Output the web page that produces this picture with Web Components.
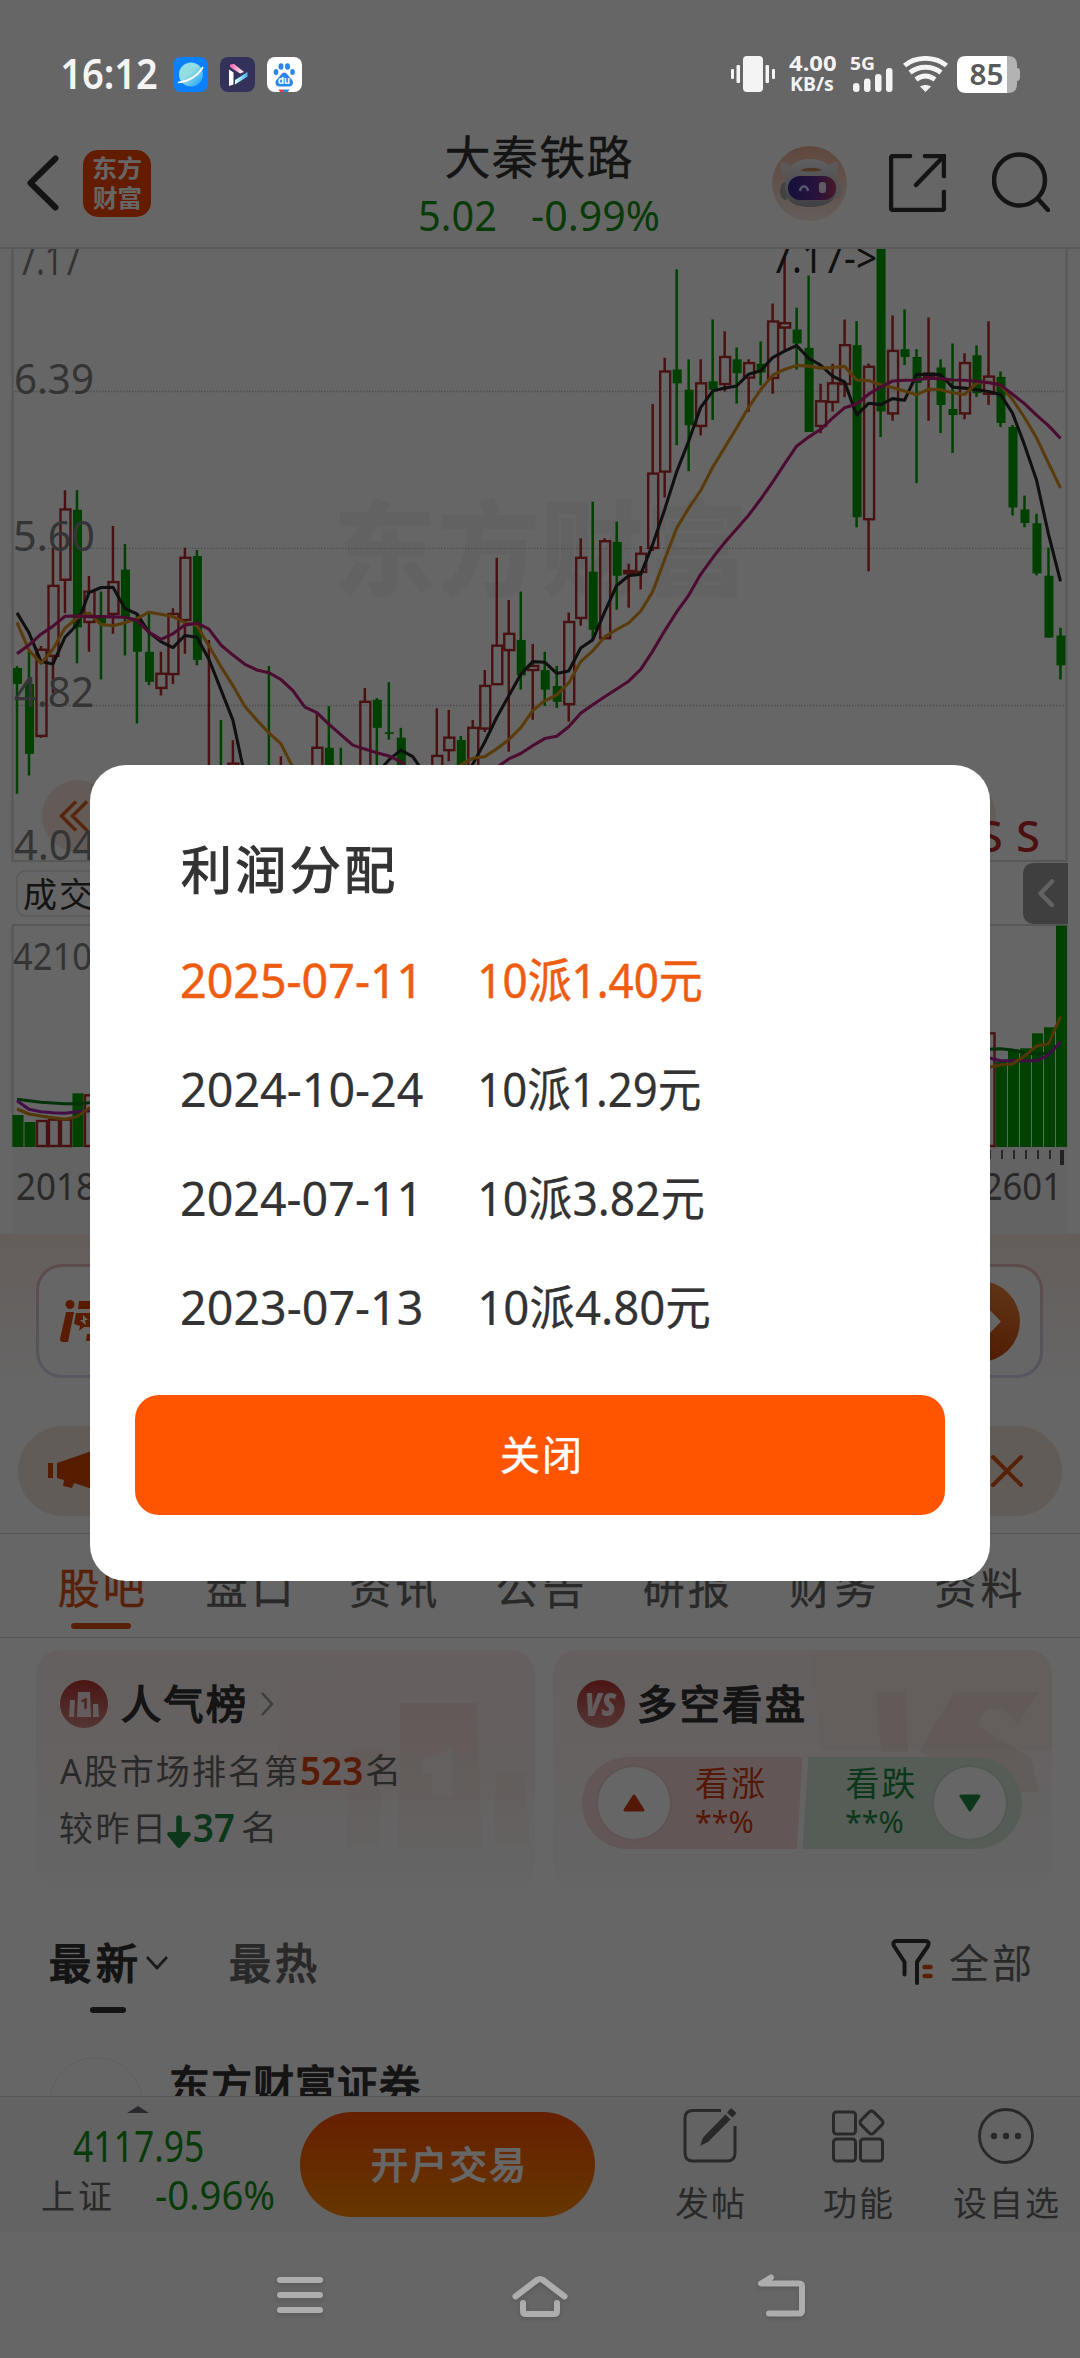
<!DOCTYPE html>
<html lang="zh-CN">
<head>
<meta charset="utf-8">
<title>大秦铁路</title>
<style>
html,body{margin:0;padding:0}
body{width:1080px;height:2358px;overflow:hidden;background:#fff;font-family:"Noto Sans","Noto Sans CJK SC",sans-serif;color:#333}
</style>
</head>
<body>
<stock-app></stock-app>
<script>
const FONT = '"Noto Sans","Noto Sans CJK SC",sans-serif';
const ctx = document.createElement('canvas').getContext('2d');

function define(name, html, setup) {
  const tpl = document.createElement('template');
  tpl.innerHTML = html;
  customElements.define(name, class extends HTMLElement {
    connectedCallback() {
      if (this.shadowRoot) return;
      this.attachShadow({ mode: 'open' }).append(tpl.content.cloneNode(true));
      if (setup) setup(this, this.shadowRoot);
    }
  });
}

/* One line of text whose ink spans exactly `w` pixels.
   mode="space" spreads the letters, the default scales them. */
define('fit-text', `<style>
:host{display:block;flex:none;white-space:nowrap;font-family:${FONT}}
span{display:inline-block;transform-origin:0 50%;vertical-align:top}
</style><span><slot></slot></span>`, (el, root) => {
  const s = +el.getAttribute('size'), w = +el.getAttribute('w');
  const lh = el.getAttribute('lh') || Math.round(s * 1.2);
  const weight = el.getAttribute('weight') || 400;
  const text = el.textContent, n = [...text].length;
  ctx.font = `${weight} ${s}px ${FONT}`;
  const m = ctx.measureText(text);
  const ink = m.actualBoundingBoxLeft + m.actualBoundingBoxRight;
  el.style.cssText += `;font-size:${s}px;font-weight:${weight};line-height:${lh}px;height:${lh}px;width:${w}px;`;
  const c = el.getAttribute('color'); if (c) el.style.color = c;
  const st = el.getAttribute('stroke'); if (st) el.style.webkitTextStroke = st + 'px currentColor';
  const span = root.querySelector('span');
  if (el.getAttribute('mode') === 'space' && n > 1) {
    span.style.letterSpacing = (w - ink) / (n - 1) + 'px';
    span.style.transform = `translateX(${m.actualBoundingBoxLeft}px)`;
  } else {
    /* digits sit slightly below the middle of the line box */
    span.style.transform = `translateY(${(-s * .03).toFixed(2)}px) scaleX(${w / ink}) translateX(${m.actualBoundingBoxLeft}px)`;
  }
});

define('status-bar', `<style>
:host{display:flex;box-sizing:border-box;height:120px;padding:28px 60px 0 62px;align-items:center;justify-content:space-between;position:relative;z-index:2;color:#f4f4f4}
.l,.r{display:flex;align-items:center}
.apps{display:flex;gap:12px;margin-left:16px}
svg{display:block;flex:none}
.sp{display:flex;flex-direction:column;align-items:center;width:48px;margin:-2px 14px 0 13px}
</style>
<div class="l">
  <fit-text size="42" w="95" weight="600" lh="50">16:12</fit-text>
  <div class="apps">
    <svg width="35" height="35" viewBox="0 0 35 35"><defs><linearGradient id="p" x1="0" y1="0" x2="1" y2="1"><stop offset="0" stop-color="#9be0ee"/><stop offset=".45" stop-color="#8fdde0"/><stop offset="1" stop-color="#159bff"/></linearGradient></defs><rect width="35" height="35" rx="8" fill="#0a80ff"/><circle cx="18" cy="17.500" r="12" fill="url(#p)"/><path d="M5 25.500C14 25 25 19 30 10" fill="none" stroke="#fff" stroke-width="1.700"/></svg>
    <svg width="35" height="35" viewBox="0 0 35 35"><defs><linearGradient id="a"><stop stop-color="#ff5ca8"/><stop offset="1" stop-color="#fff"/></linearGradient><linearGradient id="b" x1="1" x2="0"><stop stop-color="#3fb4f4"/><stop offset="1" stop-color="#dff"/></linearGradient></defs><rect width="35" height="35" rx="8" fill="#32325a"/><path d="M9 12.500l4.500 3v12l-4.500 1.500z" fill="#fff"/><path d="M10 7.500l4-.5 10 8-4 1.500L10 10z" fill="url(#a)"/><path d="M15 23l12.500-8v4.500L15 27.500z" fill="url(#b)"/></svg>
    <svg width="35" height="35" viewBox="0 0 35 35"><rect width="35" height="35" rx="8" fill="#fff"/><g fill="#2a86ea"><ellipse cx="14" cy="9.500" rx="2.500" ry="3.300"/><ellipse cx="20.500" cy="9.500" rx="2.500" ry="3.300"/><ellipse cx="9" cy="15" rx="2.300" ry="3"/><ellipse cx="25.500" cy="15" rx="2.300" ry="3"/><path d="M17.300 15.500c3 0 4 4 6.700 6.200 3.600 3.100 2 7.800-2 7.800h-9.500c-4 0-5.600-4.700-2-7.800 2.700-2.200 3.800-6.200 6.800-6.200z"/></g><path d="M11.500 32.500H17V35h-4z" fill="#e33b55"/><path d="M17 32.500h5.500L21 35h-4z" fill="#2a86ea"/><text x="11" y="27" font-family="Inter" font-size="9.500" font-weight="700" fill="#fff" textLength="12">du</text></svg>
  </div>
</div>
<div class="r">
  <svg width="44" height="36" viewBox="0 0 44 36" fill="#f4f4f4"><rect x="12" width="20" height="36" rx="4"/><rect x="5.500" y="9" width="3.500" height="18" rx="1"/><rect y="13" width="3" height="10" rx="1"/><rect x="34.500" y="9" width="3.500" height="18" rx="1"/><rect x="41" y="13" width="3" height="10" rx="1"/></svg>
  <div class="sp"><fit-text size="22" w="47" weight="700" lh="22">4.00</fit-text><fit-text size="19.500" w="42" weight="700" lh="21">KB/s</fit-text></div>
  <svg width="43" height="36" viewBox="0 0 43 36" fill="#f4f4f4"><text x="0" y="13.500" font-family="Noto Sans" font-weight="700" font-size="17.500" textLength="25" lengthAdjust="spacingAndGlyphs">5G</text><rect x="3" y="27" width="6.500" height="9" rx="3"/><rect x="14" y="22.500" width="6.500" height="13.500" rx="3"/><rect x="25" y="18" width="6.500" height="18" rx="3"/><rect x="36" y="12" width="6.500" height="24" rx="3"/></svg>
  <svg style="margin:0 9px 0 10px" width="45" height="36" viewBox="0 0 45 36" fill="none" stroke="#f4f4f4" stroke-width="4.800"><path d="M1.500 9.500C13 0 32 0 43.500 9.500M7 16.500c9-7 22-7 31 0M13 23.500c6-4.500 13-4.500 19 0"/><path d="M17 30.500c4-2 7-2 11 0L22.500 36z" fill="#f4f4f4" stroke="none"/></svg>
  <svg width="63" height="37" viewBox="0 0 63 37"><path d="M49 0h2c6 0 9 3 9 9v3c2 0 3 1.500 3 4v5c0 2.500-1 4-3 4v3c0 6-3 9-9 9h-2z" fill="#b3b3b3"/><path d="M9 0h41v37H9c-6 0-9-3-9-9V9c0-6 3-9 9-9z" fill="#fff"/><text x="12.500" y="28.500" font-family="Noto Sans" font-weight="600" font-size="28" fill="#5a5a5a" textLength="34" lengthAdjust="spacingAndGlyphs">85</text></svg>
</div>`);

define('stock-header', `<style>
:host{display:grid;grid-template-columns:1fr 240px 1fr;box-sizing:border-box;height:129px;padding:0 30px 8px 27px;align-items:center;border-bottom:2px solid #dcdcdc}
.l,.r{display:flex;align-items:center}.l{gap:24px}.r{justify-content:flex-end}
.c{align-self:start;margin-top:6px;display:flex;flex-direction:column;align-items:center}
.q{display:flex;gap:37px;color:#159415}
.logo{width:68px;height:67px;border-radius:15px;background:#fb4600;color:#fff;display:flex;flex-direction:column;align-items:center;justify-content:center;gap:3px}
svg{display:block;flex:none}
</style>
<div class="l">
  <svg width="32" height="56" viewBox="0 0 32 56" fill="none" stroke="#333" stroke-width="6" stroke-linecap="round" stroke-linejoin="round"><path d="M28.500 3.500L3.500 28l25 24.500"/></svg>
  <div class="logo"><fit-text size="24" w="48" weight="700" lh="27">东方</fit-text><fit-text size="24" w="48" weight="700" lh="27">财富</fit-text></div>
</div>
<div class="c"><fit-text size="46" w="186" lh="60" mode="space" stroke=".4">大秦铁路</fit-text><div class="q"><fit-text size="42" w="75" lh="60">5.02</fit-text><fit-text size="42" w="126" lh="60">-0.99%</fit-text></div></div>
<div class="r">
  <svg width="75" height="75" viewBox="0 0 75 75"><defs><linearGradient id="bg" x2="0" y2="1"><stop stop-color="#eeb49b"/><stop offset="1" stop-color="#f8e9e2"/></linearGradient><linearGradient id="v"><stop stop-color="#342a95"/><stop offset=".55" stop-color="#5e2e99"/><stop offset="1" stop-color="#b43a65"/></linearGradient><linearGradient id="h" x2="0" y2="1"><stop stop-color="#f0f0f4"/><stop offset="1" stop-color="#a0a0a8"/></linearGradient></defs><circle cx="37.500" cy="37.500" r="37.500" fill="url(#bg)"/><path d="M9 16c4 0 8 2 11 5l-8 9c-3-3-4-8-3-14zM66 16c-4 0-8 2-11 5l8 9c3-3 4-8 3-14z" fill="#e4dcde"/><ellipse cx="13" cy="45" rx="5" ry="9" fill="#a8a2a4"/><ellipse cx="65" cy="45" rx="5" ry="8" fill="#d8ccca"/><path d="M38 13c18 0 27 11 27 28 0 14-10 20-27 20S13 55 13 41c0-17 7-28 25-28z" fill="url(#h)"/><path d="M28 24c7-3 16-3 22 0-6 2-16 2-22 0z" fill="#c88a5c"/><rect x="16" y="30" width="48" height="24" rx="12" fill="url(#v)"/><path d="M28 45c1-6 7-6 8 0" fill="none" stroke="#ddd8ff" stroke-width="2.500"/><rect x="47" y="36" width="7" height="11" rx="3" fill="#f1e4f4"/></svg>
  <svg style="margin:0 46px 0 42px" width="57" height="58" viewBox="0 0 57 58" fill="none" stroke="#333" stroke-width="4.500" stroke-linecap="round" stroke-linejoin="round"><path d="M21 2H4a2 2 0 0 0-2 2v50a2 2 0 0 0 2 2h49a2 2 0 0 0 2-2V38M36 2h19v20M54 3L27 31"/></svg>
  <svg style="margin-top:-3px" width="58" height="60" viewBox="0 0 58 60" fill="none" stroke="#333" stroke-width="4.500" stroke-linecap="round"><circle cx="27.500" cy="28" r="25.500"/><path d="M46 47l10 11"/></svg>
</div>`);

/* candles: [index, isUp, high, bodyTop, bodyBottom, low] in plot units */
const CANDLES = [[0,0,1260,1266,1313,1638],[1,0,1215,1313,1520,1584],[2,1,1201,1212,1467,1472],[3,1,910,1023,1230,1340],[4,1,740,797,1005,1104],[5,0,740,798,1146,1252],[6,1,994,1040,1130,1218],[7,0,1040,1115,1134,1300],[8,1,846,1012,1106,1165],[9,0,899,975,1115,1229],[10,0,1105,1119,1218,1430],[11,0,1104,1218,1307,1317],[12,1,1218,1283,1325,1347],[13,1,1089,1106,1284,1313],[14,1,910,940,1124,1224],[15,0,917,935,1242,1258],[16,1,1183,1620,1700,1720],[17,0,1420,1620,1700,1720],[18,1,1480,1549,1580,1600],[21,0,1260,1620,1700,1710],[22,1,1527,1620,1700,1710],[25,1,1400,1502,1650,1660],[26,0,1379,1502,1650,1660],[27,0,1502,1620,1650,1660],[29,1,1325,1366,1650,1660],[30,0,1355,1360,1443,1650],[31,0,1308,1456,1461,1478],[32,0,1443,1472,1640,1650],[35,1,1385,1526,1640,1650],[36,1,1390,1472,1509,1542],[37,0,1467,1479,1640,1650],[38,1,1420,1443,1640,1650],[39,1,1272,1319,1445,1455],[40,1,940,1200,1314,1314],[41,1,1065,1165,1213,1514],[42,0,1040,1183,1288,1330],[43,1,1195,1260,1272,1419],[44,0,1218,1272,1330,1378],[45,0,1260,1319,1366,1384],[46,1,1102,1130,1373,1425],[47,1,882,940,1118,1141],[48,0,774,981,1153,1183],[49,1,882,891,1178,1178],[50,0,833,893,993,1094],[51,1,958,979,986,1088],[52,1,905,928,982,1034],[53,1,485,691,911,920],[54,1,348,389,685,762],[55,0,87,383,424,607],[56,0,353,443,548,684],[57,1,353,424,550,578],[58,0,235,418,443,532],[59,1,270,346,426,448],[60,0,318,353,394,484],[61,1,353,364,407,508],[62,0,300,366,392,430],[63,1,188,241,408,455],[64,1,50,246,259,330],[65,0,200,265,306,383],[66,0,105,319,568,568],[67,1,425,477,550,572],[68,1,366,424,479,507],[69,1,235,311,426,465],[70,0,240,311,820,850],[71,1,365,375,826,980],[72,0,20,20,507,583],[73,1,223,328,513,535],[74,0,205,323,346,370],[75,0,323,346,423,719],[76,1,229,395,405,535],[77,0,353,377,488,571],[78,0,306,500,518,630],[79,1,335,364,513,530],[80,0,312,341,453,464],[81,1,240,404,455,488],[82,0,389,405,541,553],[83,0,547,553,791,815],[84,0,756,797,837,850],[85,0,810,838,986,992],[86,0,910,993,1176,1176],[87,0,1147,1170,1258,1300]];
/* moving averages: [first index, values...] */
const LINES = [
 ['#2a2a2a',[0,1103,1162,1247,1254,1175,1138,1043,1028,1027,1090,1106,1160,1188,1206,1170,1175,1240,1330,1420,1585],[30,1580,1538,1509,1528,1580],[37,1610,1550,1485,1412,1348,1285,1247,1249,1282,1275,1207,1183,1100,1022,993,989,900,797,685,595,495,447,438,432,397,387,348,329,312,350,370,403,420,518,483,487,469,474,398,397,398,435,438,443,448,457,512,606,710,870,1010]],
 ['#e0941e',[0,1131,1214,1252,1210,1148,1118,1103,1137,1141,1132,1120,1101,1107,1114,1132,1140,1200,1262,1318,1380,1420,1458,1490,1560],[36,1590,1552,1533,1528,1505,1478,1443,1392,1363,1346,1310,1247,1215,1174,1152,1133,1098,1040,945,852,793,741,672,614,556,495,443,400,383,371,373,379,377,374,414,416,427,436,447,458,441,443,452,457,424,420,430,472,525,585,660,734]],
 ['#be1e7d',[0,1224,1198,1166,1142,1113,1112,1114,1114,1115,1116,1125,1160,1181,1165,1139,1133,1151,1198,1228,1255,1272,1280,1300,1333,1382,1398,1432,1463,1494,1506,1517,1526,1543,1580],[39,1590,1560,1535,1519,1496,1475,1468,1440,1400,1375,1351,1328,1305,1270,1216,1156,1100,1051,989,940,895,855,814,767,716,662,610,583,560,527,496,485,456,435,417,415,414,409,410,414,415,418,422,429,456,484,518,549,587]]];
const VOLUME = [[0,0,1065],[1,0,1086],[2,1,1083],[3,1,1079],[4,1,1079],[5,0,1000],[6,1,1006],[81,1,820],[82,0,905],[83,0,868],[84,0,865],[85,0,820],[86,0,802],[87,0,497]];
const VLINES = [
 ['#0a7d1c',[0,1018,1022,1027,1029,1031,1031,1028,1026],[80,872,868,866,870,878,882,880,850]],
 ['#a823b4',[0,1022,1048,1055,1058,1060,1055,1053,1053],[80,885,893,902,902,902,902,885,845]],
 ['#d08a18',[0,1047,1062,1068,1073,1078,1070,1045,1030],[80,925,922,915,912,888,858,852,770]]];

define('stock-chart', `<style>:host{display:block;height:985px}svg{display:block}text{font-family:${FONT}}</style>
<svg width="1080" height="985" viewBox="0 249 1080 985">
<g fill="#f6f6f6" font-weight="900" font-size="103"><text x="333" y="588" textLength="415">东方财富</text></g>
<g stroke="#c2c2c2" stroke-dasharray="1.500 1.500" stroke-width="1.300"><path d="M12 391.500H1066M12 548.300H1066M12 705.500H1066"/></g>
<path d="M12.500 249V861M1066.500 249V861M12 861H1067M12 925H1067M12.500 925V1147M1066.500 925V1147" stroke="#dadada" stroke-width="2" fill="none"/>
<rect x="12" y="1147" width="1056" height="87" fill="#f8f8f8"/>
<g id="plot" fill="none"></g>
<g fill="#838383" font-size="42">
<text x="18" y="274.500" textLength="63" lengthAdjust="spacingAndGlyphs">7.17</text><text x="14" y="393.800" textLength="80" lengthAdjust="spacingAndGlyphs">6.39</text><text x="13" y="550.800" textLength="82" lengthAdjust="spacingAndGlyphs">5.60</text><text x="14" y="707" textLength="80" lengthAdjust="spacingAndGlyphs">4.82</text></g>
<text x="771" y="273" font-size="41" fill="#2a2a2a" textLength="106" lengthAdjust="spacingAndGlyphs">7.17-&gt;</text>
<circle cx="78" cy="816" r="36" fill="#f6e3dc"/><circle cx="960" cy="816" r="36" fill="#f6e3dc"/>
<path d="M76 801.500L61.500 816 76 830.500M87 801.500L72.500 816 87 830.500" fill="none" stroke="#d85c1a" stroke-width="3.500"/>
<text x="14" y="860" font-size="42" fill="#838383" textLength="82" lengthAdjust="spacingAndGlyphs">4.04</text>
<g fill="#be2828" font-size="43" font-weight="500"><text x="979" y="851.500" textLength="61">S S</text></g>
<rect x="17" y="871" width="140" height="45" rx="8" fill="#fff" stroke="#dedede" stroke-width="1.500"/>
<text x="23" y="906.500" font-size="34" fill="#333" textLength="106">成交量</text>
<path d="M1068 863v61h-33q-12 0-12-12v-37q0-12 12-12z" fill="#9d9d9d"/><path d="M1052 881.500l-11.500 12L1052 905" fill="none" stroke="#f4f4f4" stroke-width="4.500" stroke-linecap="round" stroke-linejoin="round"/>
<g fill="#838383" font-size="38"><text x="13" y="970" textLength="79" lengthAdjust="spacingAndGlyphs">4210</text></g>
<g fill="#666" font-size="38"><text x="16" y="1199.500" textLength="80" lengthAdjust="spacingAndGlyphs">2018</text><text x="943" y="1199.500" textLength="119" lengthAdjust="spacingAndGlyphs">202601</text></g>
<path d="M990 1150v9M1002 1150v9M1014 1150v9M1026 1150v9M1038 1150v9M1050 1150v9" stroke="#666" stroke-width="2"/><path d="M1062 1150v15" stroke="#555" stroke-width="4"/>
</svg>`, (el, root) => {
  const X = i => 17 + 11.994 * i, Y = v => 240 + v / 2.958, V = v => 760 + v / 3;
  const path = (segs, f) => segs.map(([s, ...v]) => 'M' + v.map((y, k) => `${X(s + k).toFixed(1)} ${f(y).toFixed(1)}`).join('L')).join('');
  let h = '';
  for (const [i, up, hi, t, b, lo] of CANDLES) {
    const x = X(i), c = up ? '#b42e2e' : '#00a000';
    h += up
      ? `<path d="M${x} ${Y(hi)}V${Y(t)}M${x} ${Y(b)}V${Y(lo)}" stroke="${c}" stroke-width="2.500"/><rect x="${x - 4.500}" y="${Y(t)}" width="10" height="${(b - t) / 2.958}" stroke="${c}" stroke-width="2.400"/>`
      : `<path d="M${x} ${Y(hi)}V${Y(lo)}" stroke="${c}" stroke-width="2.500"/><rect x="${x - 4}" y="${Y(t)}" width="9" height="${(b - t) / 2.958}" fill="${c}"/>`;
  }
  for (const [c, ...s] of LINES) h += `<path d="${path(s, Y)}" stroke="${c}" stroke-width="3.100" stroke-linejoin="round"/>`;
  for (const [i, up, t] of VOLUME) {
    const x = X(i) - 4.500, y = V(t);
    h += up ? `<rect x="${x + .5}" y="${y}" width="10" height="${1146 - y}" stroke="#b42e2e" stroke-width="2.400"/>` : `<rect x="${x}" y="${y}" width="11" height="${1147 - y}" fill="#00a000"/>`;
  }
  for (const [c, ...s] of VLINES) h += `<path d="${path(s, V)}" stroke="${c}" stroke-width="3"/>`;
  root.querySelector('#plot').innerHTML = h;
});

define('ask-banner', `<style>
:host{display:block;box-sizing:border-box;height:149px;padding:30px 37px 5px 36px;background:linear-gradient(#fbe9e2,#fff)}
.b{box-sizing:border-box;height:114px;border-radius:26px;padding:3px;background:linear-gradient(#ecbcb6,#d4d8ee)}
.i{height:108px;border-radius:23px;background:#fff;display:flex;align-items:center;justify-content:space-between;padding:0 20px 0 21px}
svg{display:block}
</style><div class="b"><div class="i">
<svg width="60" height="42" viewBox="0 0 60 42" fill="#e04800"><circle cx="10" cy="4.500" r="4.500"/><path d="M6 12h8L8 42H3q-3 0-3-3z"/><path d="M19 1h36l-6 40H26l1-7h15l4-25H18z"/><path d="M16 13h17l-2 14h-7l-5 4 1-5-6-2z"/><path d="M23 15l5 5h-3l1 5-6-5h3z" fill="#fff"/></svg>
<svg width="81" height="81" viewBox="0 0 81 81"><defs><linearGradient id="g" x1=".9" y1="0" x2=".4" y2="1"><stop stop-color="#f08a3c"/><stop offset="1" stop-color="#c63c00"/></linearGradient></defs><circle cx="40.500" cy="40.500" r="40.500" fill="url(#g)"/><path d="M44 29l11 11.500L44 52" fill="none" stroke="#fff" stroke-width="10"/></svg>
</div></div>`);

define('notice-bar', `<style>
:host{display:flex;box-sizing:border-box;height:90px;margin:43px 18px 17px;padding:0 38px 0 29px;border-radius:45px;background:#f6e5dc;align-items:center;justify-content:space-between}svg{display:block}
</style><svg width="60" height="42" viewBox="0 0 60 42" fill="#d84800"><rect x="1" y="13" width="5" height="15"/><path d="M10 13L42 2l14-2v40l-14-2-15-5-2 5-9-2 1-6-7-2z"/></svg>
<svg width="34" height="34" viewBox="0 0 34 34" stroke="#d85310" stroke-width="4" stroke-linecap="round"><path d="M3 3l28 28M31 3L3 31"/></svg>`);

define('tab-strip', `<style>
:host{display:flex;box-sizing:border-box;height:105px;border:solid #d6d6d6;border-width:1px 0;padding:28px 28px 0}
div{width:146.300px;flex:none;display:flex;flex-direction:column;align-items:center;color:#666}
.on{color:#de5216}i{width:60px;height:6px;border-radius:3px;background:currentColor;margin-top:9px}
</style><div class="on"><fit-text size="42" w="85" lh="52" mode="space" stroke=".5">股吧</fit-text><i></i></div><div><fit-text size="42" w="82" lh="52" mode="space" stroke=".3">盘口</fit-text></div><div><fit-text size="42" w="85" lh="52" mode="space" stroke=".3">资讯</fit-text></div><div><fit-text size="42" w="85" lh="52" mode="space" stroke=".3">公告</fit-text></div><div><fit-text size="42" w="85" lh="52" mode="space" stroke=".3">研报</fit-text></div><div><fit-text size="42" w="85" lh="52" mode="space" stroke=".3">财务</fit-text></div><div><fit-text size="42" w="85" lh="52" mode="space" stroke=".3">资料</fit-text></div>`);

define('promo-card', `<style>
:host{display:block;box-sizing:border-box;width:499px;height:240px;border-radius:24px;padding:26px 24px 0 24px;background:linear-gradient(#fdf0ee,#fdf4f2 50%,#fcfafa 85%,#fdfdfd);overflow:hidden;position:relative}
header{display:flex;align-items:center;height:56px}
.art{position:absolute;inset:0;z-index:0}
.in{position:relative}
</style><div class="art"><slot name="art"></slot></div><div class="in"><header><slot name="title"></slot></header><slot></slot></div>`);

define('card-row', `<style>
:host{display:flex;justify-content:space-between;padding:12px 28px 0 36px;height:240px}
svg{display:block;flex:none}
.t{display:flex;align-items:center}
.ln{display:flex;height:57px;align-items:center;color:#666}
.p1{margin-top:10px}
.vote{display:flex;margin:25px 0 0 5px;width:440px;height:92px}
.half{display:flex;align-items:center;height:92px;box-sizing:border-box}
.up{background:#f6d8d6;border-radius:46px 0 0 46px;clip-path:polygon(0 0,100% 0,97.500% 100%,0 100%);color:#d23c14;padding-left:16px;width:221px}
.dn{background:#d4e8d8;border-radius:0 46px 46px 0;clip-path:polygon(2.700% 0,100% 0,100% 100%,0 100%);color:#218a42;padding-left:44px;width:220px}
.c{width:72px;height:72px;border-radius:50%;background:#fff;display:flex;align-items:center;justify-content:center;box-shadow:0 0 0 2px #0000000a;flex:none}
.tx{display:flex;flex-direction:column;margin-top:-3px}
</style>
<promo-card>
  <svg slot="art" width="499" height="240" viewBox="0 0 499 240"><defs><linearGradient id="f1" x2="0" y2="1"><stop stop-color="#f2d6d3"/><stop offset="1" stop-color="#faf2ef"/></linearGradient></defs><path d="M290 0h209v150H242V30h45z" fill="#fbeeea" opacity=".45"/><path d="M364 53h77l5 145h-84zM314 101h33l-4 96h-33zM459 124h30l5 72h-35z" fill="url(#f1)" opacity=".6"/><path d="M386 109l30-10v46h-20v-22l-10 1z" fill="#fdf8f6" opacity=".6"/></svg>
  <div slot="title" class="t"><svg width="48" height="48" viewBox="0 0 48 48"><defs><linearGradient id="g1" x2="0" y2="1"><stop stop-color="#b93735"/><stop offset="1" stop-color="#d18683"/></linearGradient></defs><circle cx="24" cy="24" r="24" fill="url(#g1)"/><path d="M10 20h5l-1 17H9zM18 12h12l1 25H17zM33 24h5l1 13h-6z" fill="#f5e8e6"/><path d="M21.500 21.500l4-2V29" fill="none" stroke="#c25c58" stroke-width="2.500"/></svg><fit-text style="margin-left:14px" size="40" w="122" stroke="1.600" lh="56" mode="space">人气榜</fit-text><svg style="margin-left:17px" width="13" height="24" viewBox="0 0 13 24" fill="none" stroke="#999" stroke-width="2.500"><path d="M1 1l10 11L1 23"/></svg></div>
  <div class="ln p1"><fit-text size="34" w="237" lh="50" mode="space">A股市场排名第</fit-text><fit-text style="margin-left:5px" size="39" w="60" weight="600" lh="50" color="#dc4510">523</fit-text><fit-text style="margin-left:4px" size="34" w="30" lh="50">名</fit-text></div>
  <div class="ln"><fit-text size="34" w="101" lh="50" mode="space">较昨日</fit-text><svg style="margin:8px 3px 0 6px" width="24" height="34" viewBox="0 0 24 34" fill="#218a42"><path d="M12 3v18" stroke="#218a42" stroke-width="5.500" stroke-linecap="round"/><path d="M2 17h20q3 1 1 4L14 32q-2 2-4 0L1 21q-2-3 1-4z"/></svg><fit-text size="40" w="40" weight="600" lh="50" color="#218a42">37</fit-text><fit-text style="margin-left:8px" size="34" w="30" lh="50">名</fit-text></div>
</promo-card>
<promo-card>
  <svg slot="art" width="499" height="240" viewBox="0 0 499 240"><path d="M257 0h242v100H268z" fill="#f8e4e1" opacity=".45"/><path d="M323 42h29l3 60h-27zM366 102l35-60h85l-22 32c-12-22-42-20-36 4l50 30 8 34h-22z" fill="#f0d6d4" opacity=".5"/></svg>
  <div slot="title" class="t"><svg width="48" height="48" viewBox="0 0 48 48"><defs><linearGradient id="g2" x2="0" y2="1"><stop stop-color="#b93735"/><stop offset="1" stop-color="#d18683"/></linearGradient></defs><circle cx="24" cy="24" r="24" fill="url(#g2)"/><text x="8" y="36" font-family="Open Sans" font-style="italic" font-weight="800" font-size="31" fill="#f5e8e6" textLength="31" lengthAdjust="spacingAndGlyphs">VS</text></svg><fit-text style="margin-left:14px" size="40" w="165" stroke="1.600" lh="56" mode="space">多空看盘</fit-text></div>
  <div class="vote">
    <div class="half up"><div class="c"><svg width="22" height="18" viewBox="0 0 22 18"><path d="M2 16L11 2l9 14z" fill="#d23c14" stroke="#d23c14" stroke-width="3" stroke-linejoin="round"/></svg></div><div class="tx" style="margin-left:26px"><fit-text size="34" w="68" lh="41" mode="space">看涨</fit-text><fit-text size="31" w="57" lh="36">**%</fit-text></div></div>
    <div class="half dn"><div class="tx"><fit-text size="34" w="68" lh="41" mode="space">看跌</fit-text><fit-text size="31" w="57" lh="36">**%</fit-text></div><div class="c" style="margin-left:20px"><svg width="22" height="18" viewBox="0 0 22 18"><path d="M2 2h18l-9 14z" fill="#218a42" stroke="#218a42" stroke-width="3" stroke-linejoin="round"/></svg></div></div>
  </div>
</promo-card>`);

define('feed-filter', `<style>
:host{display:flex;box-sizing:border-box;height:160px;padding:43px 50px 0 50px}
.n{width:180px;display:flex;flex-direction:column}.a{display:flex;align-items:center;gap:9px}
i{width:36px;height:6px;border-radius:3px;background:#333;margin:14px 0 0 40px}
.f{display:flex;margin-left:auto;height:60px;align-items:center;gap:17px;color:#666}svg{display:block}
</style><div class="n"><div class="a"><fit-text size="42" w="87" stroke="1.700" lh="60" mode="space">最新</fit-text><svg width="22" height="14" viewBox="0 0 22 14" fill="none" stroke="#444" stroke-width="2.800"><path d="M1 1l10 11L21 1"/></svg></div><i></i></div>
<fit-text size="42" w="86" stroke="1.400" lh="60" color="#666" mode="space">最热</fit-text>
<div class="f"><svg style="margin-bottom:3px" width="42" height="46" viewBox="0 0 42 46" fill="none" stroke="#333" stroke-width="4" stroke-linecap="round" stroke-linejoin="round"><path d="M13.500 35.500V23L3 7q-2-5 3-5h28q5 0 3 5L26 23v21"/><path d="M33.500 28h6M33.500 37h6" stroke="#e05210" stroke-width="4.500"/></svg><fit-text size="40" w="80" lh="60" mode="space">全部</fit-text></div>`);

define('post-item', `<style>
:host{display:flex;height:46px;overflow:hidden;padding-left:49px}
i{box-sizing:border-box;width:94px;height:94px;border:1.500px solid #eee;border-radius:50%;margin:7px 28px 0 0}
</style><i></i><fit-text style="margin-top:4px" size="41" w="248" stroke="1.600" lh="60" mode="space">东方财富证券</fit-text>`);

define('trade-bar', `<style>
:host{display:flex;box-sizing:border-box;height:136px;border-top:1.500px solid #dcdcdc;background:#f8f8f8}
svg{display:block;flex:none}
.x{width:300px;padding-top:9px;box-sizing:border-box;color:#159415}
.r{display:flex;gap:45px;padding-left:42px;margin-top:5px}
.b{width:295px;height:105px;border-radius:53px;margin:15px 41px 0 0;background:linear-gradient(#ff5000,#ff8800);display:flex;align-items:center;justify-content:center;color:#fff;flex:none}
.a{width:148px;display:flex;flex-direction:column;align-items:center;padding-top:11px;color:#666;flex:none;gap:20px}
</style>
<div class="x"><svg style="margin-left:127px" width="22" height="7"><path d="M0 7L11 0l11 7z" fill="#666a72"/></svg><fit-text style="margin:12px 0 0 73px" size="43" w="130" lh="44">4117.95</fit-text><div class="r"><fit-text size="34" w="69" lh="44" color="#666" mode="space">上证</fit-text><fit-text size="40" w="118" lh="44">-0.96%</fit-text></div></div>
<div class="b"><fit-text size="37" w="151" stroke="1.400" lh="60" mode="space">开户交易</fit-text></div>
<div class="a"><svg width="54" height="56" viewBox="0 0 54 56" fill="none" stroke="#666" stroke-width="3"><path d="M38 2.500H10Q2 2.500 2 10v35q0 8 8 8h34q8 0 8-8V18"/><path d="M53.500 5L48 0l-4 4.500 5.500 5zM42.500 6.500l5 5L25 34l-8 4 3-8.500z" fill="#666" stroke="none"/></svg><fit-text size="34" w="68" lh="38" mode="space">发帖</fit-text></div>
<div class="a"><svg width="54" height="56" viewBox="0 0 54 56" fill="none" stroke="#666" stroke-width="3"><rect x="2.500" y="4" width="22" height="22" rx="3"/><rect x="2.500" y="31" width="22" height="22" rx="3"/><rect x="29.500" y="31" width="22" height="22" rx="3"/><rect x="31.500" y="5.500" width="18" height="18" rx="3" transform="rotate(45 40.500 14.500)"/></svg><fit-text size="34" w="68" lh="38" mode="space">功能</fit-text></div>
<div class="a"><svg width="56" height="56" viewBox="0 0 56 56"><circle cx="28" cy="28" r="26.500" fill="none" stroke="#666" stroke-width="2.800"/><g fill="#666"><circle cx="16" cy="28" r="3.200"/><circle cx="28" cy="28" r="3.200"/><circle cx="40" cy="28" r="3.200"/></g></svg><fit-text size="34" w="104" lh="38" mode="space">设自选</fit-text></div>`);

define('nav-keys', `<style>
:host{display:flex;height:126px;align-items:center;position:relative;z-index:2;padding-left:277px;gap:188px;box-sizing:border-box;filter:drop-shadow(0 2px 2px #0002)}svg{display:block;flex:none}
</style><svg width="46" height="42" viewBox="0 0 46 42" stroke="#adadad" stroke-width="6" stroke-linecap="round"><path d="M3 6h40M3 21h40M3 36h40"/></svg>
<svg width="58" height="46" viewBox="-1 0 58 46" fill="none" stroke="#adadad" stroke-width="6" stroke-linecap="round" stroke-linejoin="round"><path d="M3.500 24.500L25 8q3-2 6 0l21.500 16.500M11 31v8q0 3 3 3h28q3 0 3-3v-8"/></svg>
<svg width="49" height="46" viewBox="0 0 49 46" fill="none" stroke="#adadad" stroke-width="6" stroke-linecap="round" stroke-linejoin="round"><path d="M14 5.500L4 11.500H42q3 0 3 3v24q0 3-3 3H12"/></svg>`);

define('dividend-row', `<style>
:host{display:flex;height:109px;align-items:center;padding-left:92px;color:#333}:host([active]){color:#ee5c12}
.d{width:299px;flex:none}
</style><div class="d"><slot name="date"></slot></div><slot></slot>`);

define('dividend-dialog', `<style>
:host{position:absolute;z-index:3;left:90px;top:765px;width:900px;height:816px;border-radius:36px;background:#fff;box-sizing:border-box;padding:74px 0 0}
h2{margin:0 0 27px 92px;font-weight:400}
button{display:flex;align-items:center;justify-content:center;width:810px;height:120px;margin:33px 45px 0;border:0;padding:0;border-radius:24px;background:#f50;color:#fff}
</style><h2><fit-text size="51" w="212" stroke="1.100" lh="60" mode="space">利润分配</fit-text></h2>
<dividend-row active><fit-text slot="date" size="48" w="232" lh="60" stroke=".5">2025-07-11</fit-text><fit-text size="48" w="220" lh="60" stroke=".5">10派1.40元</fit-text></dividend-row>
<dividend-row><fit-text slot="date" size="48" w="241" lh="60" stroke=".2">2024-10-24</fit-text><fit-text size="48" w="218.500" lh="60" stroke=".2">10派1.29元</fit-text></dividend-row>
<dividend-row><fit-text slot="date" size="48" w="232" lh="60" stroke=".2">2024-07-11</fit-text><fit-text size="48" w="222" lh="60" stroke=".2">10派3.82元</fit-text></dividend-row>
<dividend-row><fit-text slot="date" size="48" w="239" lh="60" stroke=".2">2023-07-13</fit-text><fit-text size="48" w="228" lh="60" stroke=".2">10派4.80元</fit-text></dividend-row>
<button><fit-text size="40" w="78" lh="60" mode="space" stroke=".4">关闭</fit-text></button>`);

define('stock-app', `<style>
:host{display:flex;flex-direction:column;position:relative;width:1080px;height:2358px;overflow:hidden;background:#fff}
:host>*{flex:none}
.scrim{position:absolute;inset:0;z-index:1;background:rgba(0,0,0,.6)}
</style>
<status-bar></status-bar><stock-header></stock-header><stock-chart></stock-chart><ask-banner></ask-banner><notice-bar></notice-bar><tab-strip></tab-strip><card-row></card-row><feed-filter></feed-filter><post-item></post-item><trade-bar></trade-bar><nav-keys></nav-keys>
<div class="scrim"></div><dividend-dialog></dividend-dialog>`);
</script>
</body>
</html>
